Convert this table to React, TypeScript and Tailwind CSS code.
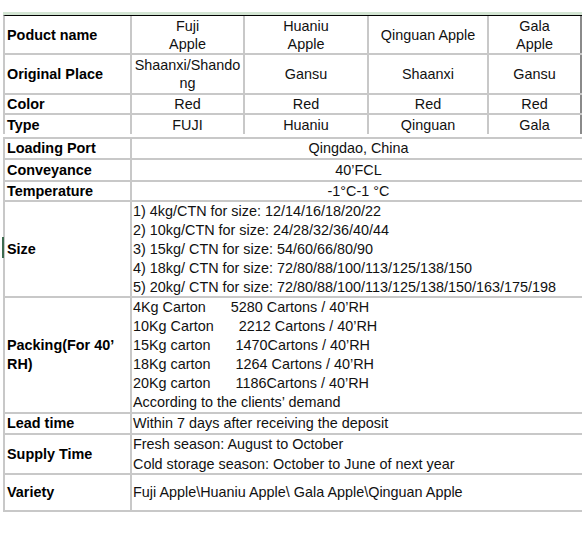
export default function App() {
  const packing = [
    ["4Kg Carton", "5280 Cartons / 40’RH"],
    ["10Kg Carton", "2212 Cartons / 40’RH"],
    ["15Kg carton", "1470Cartons / 40’RH"],
    ["18Kg carton", "1264 Cartons / 40’RH"],
    ["20Kg carton", "1186Cartons / 40’RH"],
  ];

  const sizes = [
    "1) 4kg/CTN for size: 12/14/16/18/20/22",
    "2) 10kg/CTN for size: 24/28/32/36/40/44",
    "3) 15kg/ CTN for size: 54/60/66/80/90",
    "4) 18kg/ CTN for size: 72/80/88/100/113/125/138/150",
    "5) 20kg/ CTN for size: 72/80/88/100/113/125/138/150/163/175/198",
  ];

  const label = "w-[127px] shrink-0 border-r-2 border-[#c8c8c8] pl-[2px] font-bold text-black flex items-center";
  const c2 = "w-[113px] shrink-0 border-r-2 border-[#c8c8c8] flex items-center justify-center text-center";
  const c3 = "w-[124px] shrink-0 border-r-2 border-[#c8c8c8] flex items-center justify-center text-center";
  const c4 = "w-[120px] shrink-0 border-r-2 border-[#c8c8c8] flex items-center justify-center text-center";
  const c5 = "w-[93px] shrink-0 border-r-2 border-[#8a8a8a] flex items-center justify-center text-center";
  const row2 = "flex border-b-2 border-[#c8c8c8]";

  return (
    <div className="w-[582px] h-[533px] overflow-hidden bg-white font-['Liberation_Sans',Arial,sans-serif] text-[14.4px] text-[#111]">
      {/* top strip */}
      <div className="h-[12px]" />
      <div className="ml-[3px] w-[579px] h-[3px] bg-[#d3e5d3]" />

      {/* product table */}
      <div className="ml-[3px] w-[579px] border-t border-l-2 border-t-black border-l-[#c8c8c8] leading-[18px]">
        <div className="flex h-[39px] border-b-2 border-[#c8c8c8]">
          <div className={label}>Poduct name</div>
          <div className={c2}>Fuji<br />Apple</div>
          <div className={c3}>Huaniu<br />Apple</div>
          <div className={c4}>Qinguan Apple</div>
          <div className={c5}>Gala<br />Apple</div>
        </div>
        <div className="flex h-[40px] border-b-2 border-[#c8c8c8]">
          <div className={label}>Original Place</div>
          <div className={c2}>Shaanxi/Shando<br />ng</div>
          <div className={c3}>Gansu</div>
          <div className={c4}>Shaanxi</div>
          <div className={c5}>Gansu</div>
        </div>
        <div className="flex h-[20px] border-b-2 border-[#c8c8c8]">
          <div className={label}>Color</div>
          <div className={c2}>Red</div>
          <div className={c3}>Red</div>
          <div className={c4}>Red</div>
          <div className={c5}>Red</div>
        </div>
        <div className="flex h-[19px]">
          <div className={label}>Type</div>
          <div className={c2}>FUJI</div>
          <div className={c3}>Huaniu</div>
          <div className={c4}>Qinguan</div>
          <div className={c5}>Gala</div>
        </div>
      </div>

      <div className="h-[3px]" />

      {/* details table */}
      <div className="ml-[3px] w-[582px] border-t-2 border-l-2 border-[#c8c8c8] leading-[19px]">
        <div className={`${row2} h-[21px]`}>
          <div className={label}>Loading Port</div>
          <div className="flex-1 flex items-center justify-center">Qingdao, China</div>
        </div>
        <div className={`${row2} h-[22px]`}>
          <div className={label}>Conveyance</div>
          <div className="flex-1 flex items-center justify-center">40’FCL</div>
        </div>
        <div className={`${row2} h-[20px]`}>
          <div className={label}>Temperature</div>
          <div className="flex-1 flex items-center justify-center">-1°C-1 °C</div>
        </div>
        <div className={`${row2} h-[96px] relative`}>
          <span className="absolute left-[-3px] top-[35px] w-[2px] h-[21px] bg-[#3d6b4f]" />
          <div className={label}>Size</div>
          <div className="flex-1 pl-[1px] flex flex-col">
            {sizes.map((s) => (
              <div key={s}>{s}</div>
            ))}
          </div>
        </div>
        <div className={`${row2} h-[116px]`}>
          <div className={label}>Packing(For 40’ RH)</div>
          <div className="flex-1 pl-[1px] flex flex-col">
            {packing.map(([a, b]) => (
              <div key={a} className="flex">
                <span>{a}</span>
                <span className="ml-[25px]">{b}</span>
              </div>
            ))}
            <div>According to the clients’ demand</div>
          </div>
        </div>
        <div className={`${row2} h-[21px]`}>
          <div className={label}>Lead time</div>
          <div className="flex-1 pl-[1px] flex items-center">Within 7 days after receiving the deposit</div>
        </div>
        <div className={`${row2} h-[40px]`}>
          <div className={label}>Supply Time</div>
          <div className="flex-1 pl-[1px] flex flex-col justify-center leading-[20px]">
            <div>Fresh season: August to October</div>
            <div>Cold storage season: October to June of next year</div>
          </div>
        </div>
        <div className={`${row2} h-[37px]`}>
          <div className={label}>Variety</div>
          <div className="flex-1 pl-[1px] flex items-center">
            {"Fuji Apple\\Huaniu Apple\\ Gala Apple\\Qinguan Apple"}
          </div>
        </div>
      </div>
    </div>
  );
}
